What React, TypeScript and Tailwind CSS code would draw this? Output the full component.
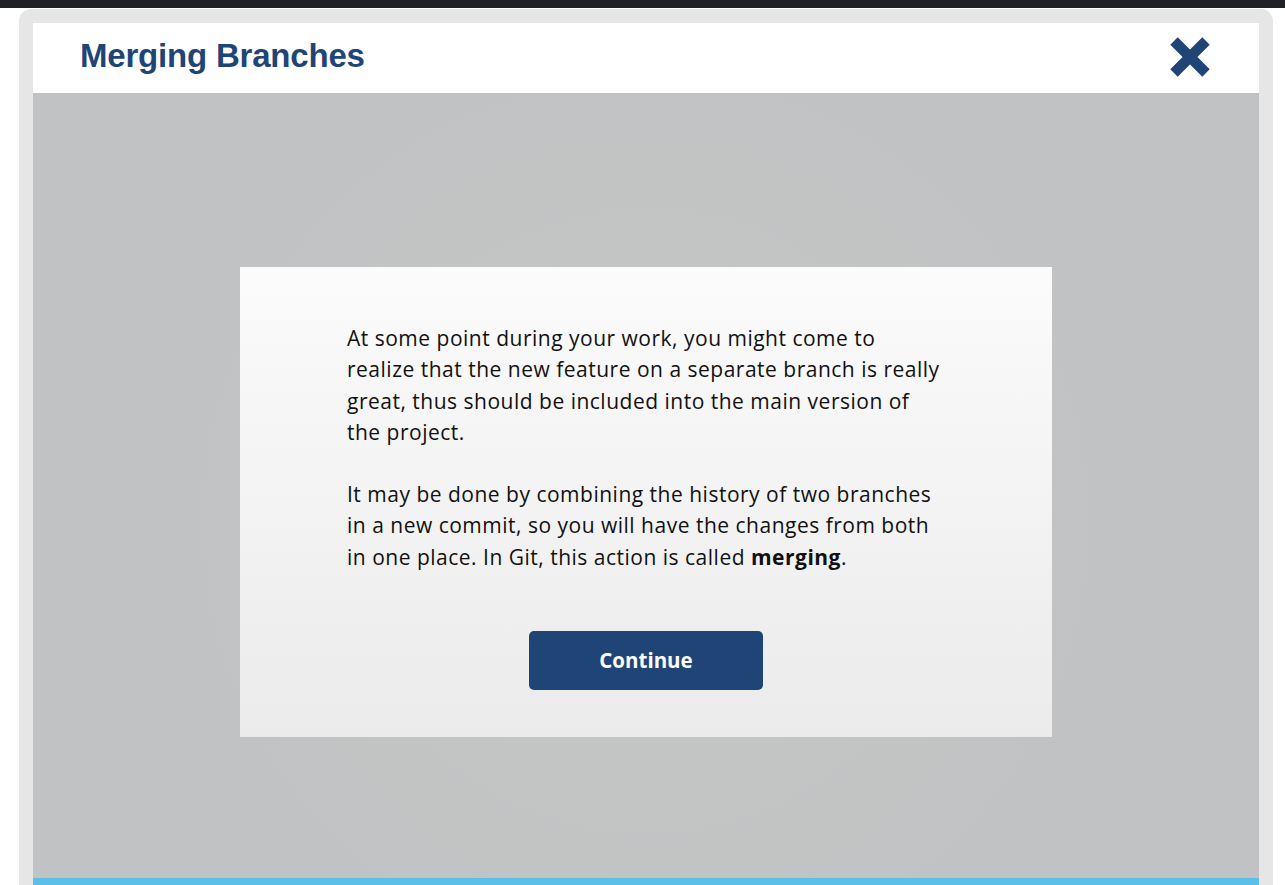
import React from 'react';

const CloseIcon = () => (
  <svg width="42" height="42" viewBox="0 0 42 42" aria-hidden="true">
    <path
      d="M5 5 L37 37 M37 5 L5 37"
      stroke="#1f4577"
      strokeWidth="10.5"
      strokeLinecap="butt"
      strokeLinejoin="round"
      fill="none"
    />
  </svg>
);

const App = () => {
  return (
    <div className="w-[1285px] h-[885px] bg-white overflow-hidden flex flex-col">
      {/* browser strip */}
      <div className="h-2 bg-[#202124] shrink-0"></div>

      <div className="flex-1 pt-px pl-[19px] pr-3 flex flex-col min-h-0">
        <div className="flex-1 bg-[#e6e6e6] rounded-t-[12px] pt-[14px] px-[14px] flex flex-col min-h-0">
          {/* header */}
          <div className="h-[70px] bg-white shrink-0 flex items-center justify-between pl-[47px] pr-[48px]">
            <h1 className="text-[33px] font-bold text-[#1f4577] tracking-[-0.2px] leading-none -mt-[6px] font-['Liberation_Sans',Arial,sans-serif]">
              Merging Branches
            </h1>
            <button className="-mt-[3px]">
              <CloseIcon />
            </button>
          </div>

          {/* body */}
          <div className="flex-1 flex flex-col bg-[radial-gradient(circle_at_50%_54%,#c5c6c5_0%,#c3c4c4_40%,#c1c2c3_60%)] min-h-0">
            <div className="flex-1 flex items-start justify-center pt-[174px]">
              <div className="w-[812px] h-[470px] bg-gradient-to-b from-[#fbfbfb] to-[#ebebeb] pt-[56px] pl-[107px] pr-[40px] font-['Open_Sans',sans-serif] text-[21px] tracking-[0.5px] leading-[31.3px] text-[#111]">
                <p>
                  At some point during your work, you might come to<br />
                  realize that the new feature on a separate branch is really<br />
                  great, thus should be included into the main version of<br />
                  the project.
                </p>
                <p className="mt-[31px]">
                  It may be done by combining the history of two branches<br />
                  in a new commit, so you will have the changes from both<br />
                  in one place. In Git, this action is called <b>merging</b>.
                </p>
                <div className="flex justify-center pr-[67px] mt-[58px]">
                  <button className="w-[234px] h-[59px] rounded-[5px] bg-[#1f4577] text-white font-bold text-[20.5px] tracking-normal">
                    Continue
                  </button>
                </div>
              </div>
            </div>
            <div className="h-[7px] bg-[#5bbfe8] shrink-0"></div>
          </div>
        </div>
      </div>
    </div>
  );
};

export default App;
